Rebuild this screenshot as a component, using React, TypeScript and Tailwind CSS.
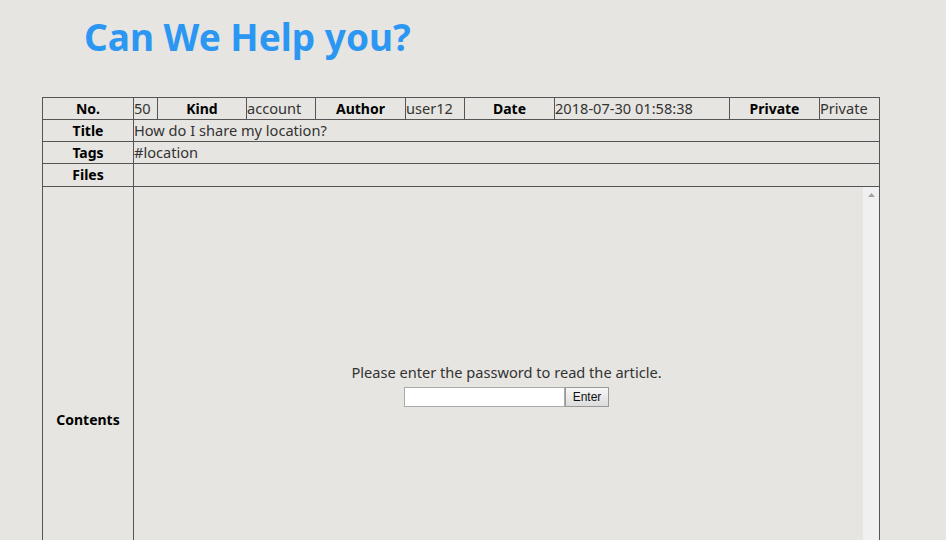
import React from "react";

const font = { fontFamily: '"Noto Sans", "Noto Sans CJK KR", sans-serif' };

const Label: React.FC<{ children: React.ReactNode; className?: string }> = ({ children, className }) => (
  <td className={`border border-[#555] text-center font-bold text-[14px] text-black leading-none ${className ?? ""}`}>
    {children}
  </td>
);

const Value: React.FC<{ children?: React.ReactNode; colSpan?: number }> = ({ children, colSpan }) => (
  <td colSpan={colSpan} className="border border-[#555] text-left text-[14.6px] text-[#333] leading-none px-0 whitespace-nowrap overflow-hidden">
    {children}
  </td>
);

export default function App() {
  return (
    <div className="w-[946px] h-[540px] overflow-hidden bg-[#e6e5e1]" style={font}>
      <h1 className="pl-[84px] pt-[13px] text-[37px] font-bold text-[#2b97f3] leading-[48px]">Can We Help you?</h1>
      <div className="pl-[42px] pt-[36px]">
        <table className="table-fixed border-collapse w-[837px]">
          <colgroup>
            <col className="w-[91px]" />
            <col className="w-[24px]" />
            <col className="w-[89px]" />
            <col className="w-[69px]" />
            <col className="w-[90px]" />
            <col className="w-[59px]" />
            <col className="w-[90px]" />
            <col className="w-[175px]" />
            <col className="w-[90px]" />
            <col className="w-[60px]" />
          </colgroup>
          <tbody>
            <tr className="h-[22px]">
              <Label>No.</Label>
              <Value>50</Value>
              <Label>Kind</Label>
              <Value>account</Value>
              <Label>Author</Label>
              <Value>user12</Value>
              <Label>Date</Label>
              <Value>2018-07-30 01:58:38</Value>
              <Label>Private</Label>
              <Value>Private</Value>
            </tr>
            <tr className="h-[22px]">
              <Label>Title</Label>
              <Value colSpan={9}>How do I share my location?</Value>
            </tr>
            <tr className="h-[22px]">
              <Label>Tags</Label>
              <Value colSpan={9}>#location</Value>
            </tr>
            <tr className="h-[23px]">
              <Label>Files</Label>
              <Value colSpan={9} />
            </tr>
            <tr className="h-[466px]">
              <Label>Contents</Label>
              <td colSpan={9} className="border border-[#555] p-0 align-top">
                <div className="relative h-[466px] flex">
                  <div className="flex-1 flex flex-col items-center pt-[175px]">
                    <p className="text-[14.6px] text-[#333] leading-[20px] pl-[16px]">Please enter the password to read the article.</p>
                    <div className="flex mt-[5px] pl-[16px]">
                      <input
                        type="password"
                        className="w-[161px] h-[20px] bg-white border border-[#aaa] outline-none"
                      />
                      <button
                        className="h-[20px] w-[44px] border border-[#999] bg-gradient-to-b from-[#f7f7f7] to-[#dcdcdc] text-[12px] text-[#111] leading-none"
                        style={{ fontFamily: '"Liberation Sans", Arial, sans-serif' }}
                      >
                        Enter
                      </button>
                    </div>
                  </div>
                  <div className="w-[16px] bg-[#f0f0f0] flex justify-center pt-[6px]">
                    <svg width="7" height="4" viewBox="0 0 7 4">
                      <path d="M0 4 L3.5 0 L7 4 Z" fill="#a3a3a3" />
                    </svg>
                  </div>
                </div>
              </td>
            </tr>
          </tbody>
        </table>
      </div>
    </div>
  );
}
